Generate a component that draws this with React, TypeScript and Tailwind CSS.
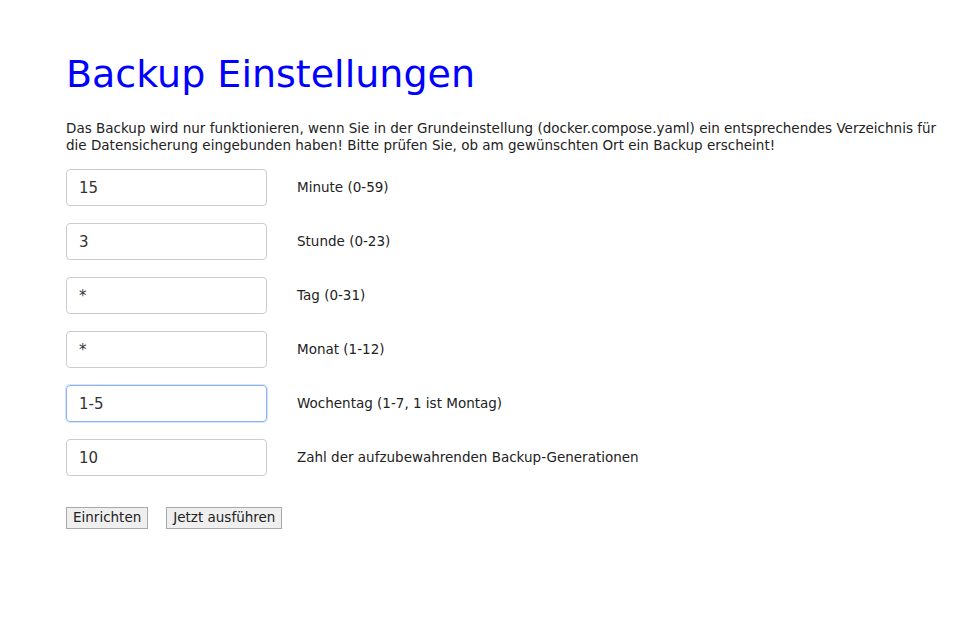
import { useState } from "react";

const fields = [
  { value: "15", label: "Minute (0-59)" },
  { value: "3", label: "Stunde (0-23)" },
  { value: "*", label: "Tag (0-31)" },
  { value: "*", label: "Monat (1-12)" },
  { value: "1-5", label: "Wochentag (1-7, 1 ist Montag)", focus: true },
  { value: "10", label: "Zahl der aufzubewahrenden Backup-Generationen" },
];

export default function App() {
  const [values, setValues] = useState(fields.map((f) => f.value));

  return (
    <div className="min-h-[642px] bg-white pl-[66px] pr-4 pt-[51px] font-['DejaVu_Sans',sans-serif] text-[#222]">
      <h1 className="text-[38px] leading-[47px] text-[#0000ff]">Backup Einstellungen</h1>
      <p className="mt-[22px] text-[13.5px] leading-[17px]">
        Das Backup wird nur funktionieren, wenn Sie in der Grundeinstellung (docker.compose.yaml) ein entsprechendes Verzeichnis für die Datensicherung eingebunden haben! Bitte prüfen Sie, ob am gewünschten Ort ein Backup erscheint!
      </p>
      <div className="mt-[15px] flex flex-col gap-[17px]">
        {fields.map((f, i) => (
          <div key={i} className="flex items-center">
            <input
              className={
                f.focus
                  ? "h-[37px] w-[201px] rounded-[4px] border border-[#8ab4f8] px-[12px] text-[15px] text-[#333] shadow-[0_0_0_1px_#d6e4fb] outline-none"
                  : "h-[37px] w-[201px] rounded-[4px] border border-[#cccccc] px-[12px] text-[15px] text-[#333] outline-none"
              }
              value={values[i]}
              onChange={(e) => {
                const next = [...values];
                next[i] = e.target.value;
                setValues(next);
              }}
            />
            <span className="ml-[30px] text-[13.5px]">{f.label}</span>
          </div>
        ))}
      </div>
      <div className="mt-[31px] flex gap-[18px]">
        <button className="h-[22px] border border-[#a9a9a9] bg-[#efefef] px-[6px] text-[13.5px] leading-none text-[#222]">Einrichten</button>
        <button className="h-[22px] border border-[#a9a9a9] bg-[#efefef] px-[6px] text-[13.5px] leading-none text-[#222]">Jetzt ausführen</button>
      </div>
    </div>
  );
}
